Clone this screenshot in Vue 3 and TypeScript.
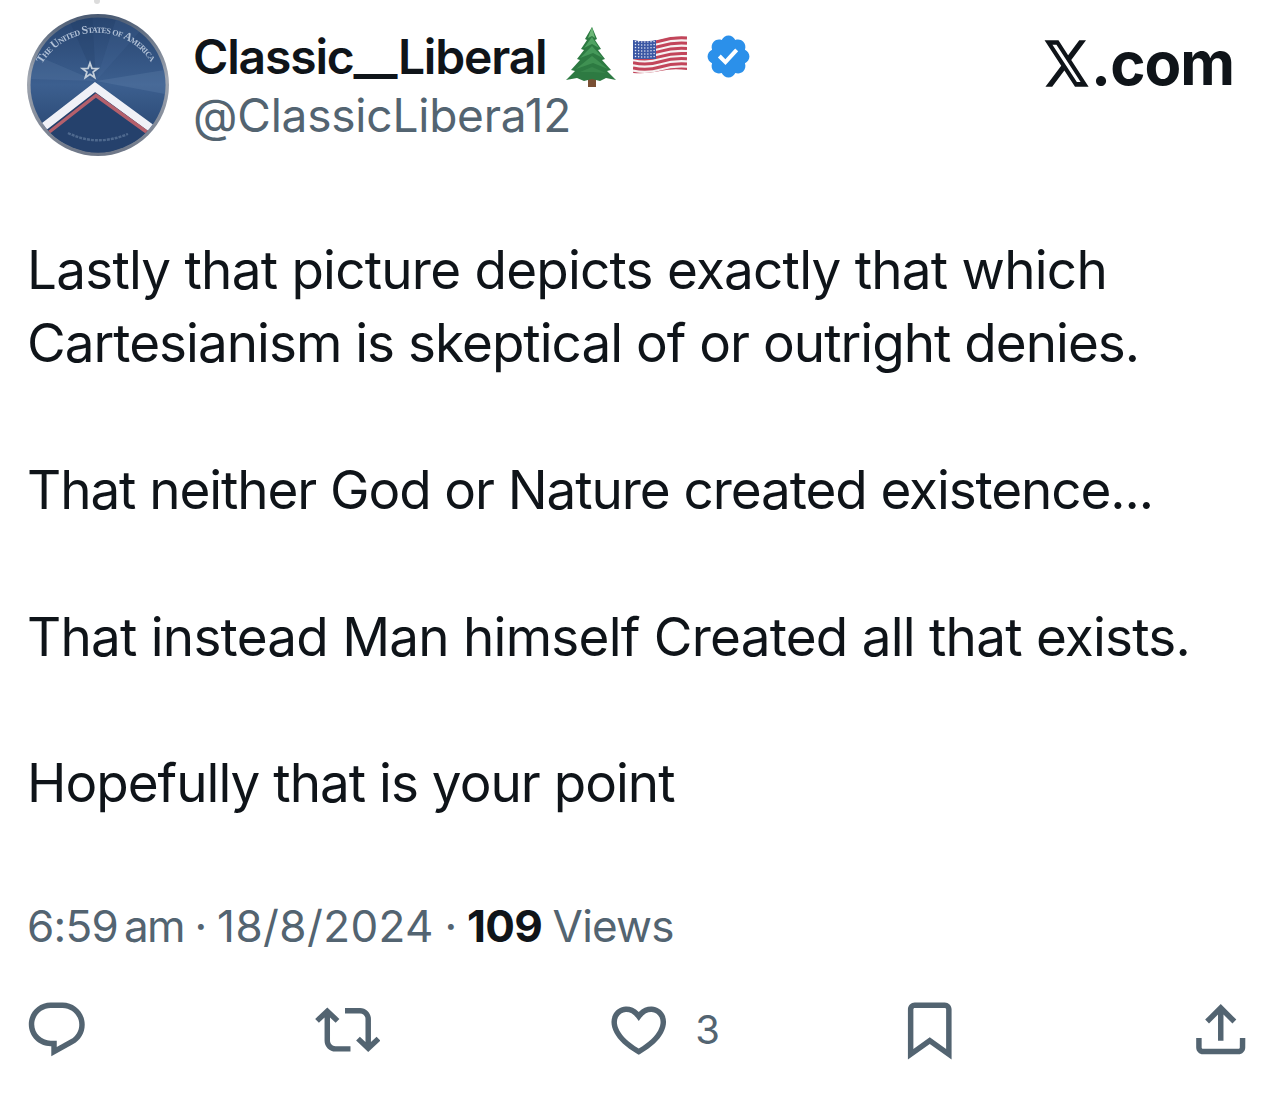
<script setup lang="ts">
interface Line { text: string; cls: string }
const paragraphs: Line[][] = [
  [
    { text: 'Lastly that picture depicts exactly that which', cls: 'wide' },
    { text: 'Cartesianism is skeptical of or outright denies.', cls: 'tight' },
  ],
  [{ text: 'That neither God or Nature created existence...', cls: 'tighter' }],
  [{ text: 'That instead Man himself Created all that exists.', cls: 'wide' }],
  [{ text: 'Hopefully that is your point', cls: 'tight' }],
]
const flagStripes: number[] = [0, 1, 2, 3, 4, 5, 6]
const flagStars: { x: number; y: number }[] = []
for (let r = 0; r < 6; r++) {
  for (let c = 0; c < 7; c++) {
    flagStars.push({ x: 2.5 + c * 3.1, y: 5.5 + r * 3 + Math.sin(c / 2) * 0.6 })
  }
}
</script>

<template>
  <main class="card">
    <header class="head">
      <svg class="avatar" viewBox="0 0 144 144" aria-label="avatar">
        <defs>
          <linearGradient id="ring" x1="0" y1="0" x2="0" y2="1">
            <stop offset="0" stop-color="#4a5a72" />
            <stop offset="0.45" stop-color="#a2a8b2" />
            <stop offset="1" stop-color="#6d7687" />
          </linearGradient>
          <linearGradient id="face" x1="0" y1="0" x2="0" y2="1">
            <stop offset="0" stop-color="#284570" />
            <stop offset="0.5" stop-color="#3c5f8f" />
            <stop offset="1" stop-color="#244069" />
          </linearGradient>
          <clipPath id="disc"><circle cx="72" cy="72" r="67.5" /></clipPath>
          <path id="topArc" d="M16 51 A64 64 0 0 1 126 51" />
        </defs>
        <circle cx="71" cy="-12" r="3" fill="#dcdcdc" />
        <circle cx="72" cy="72" r="71" fill="url(#ring)" />
        <circle cx="72" cy="72" r="67.5" fill="url(#face)" />
        <g clip-path="url(#disc)">
          <polygon points="70,68 0,38 0,66" fill="#6285af" opacity="0.22" />
          <polygon points="70,68 144,56 144,82" fill="#6a8cb5" opacity="0.25" />
          <polygon points="70,68 40,0 66,0" fill="#1f3a63" opacity="0.25" />
          <polygon points="70,68 92,0 130,0" fill="#527aa8" opacity="0.14" />
          <polygon points="70,74 8,118 72,144 136,118" fill="#25416c" />
          <polyline points="15,116 69,74 129,118" fill="none" stroke="#f0f1f7" stroke-width="8" />
          <polyline points="22,120 70,82.5 122,120" fill="none" stroke="#b5606c" stroke-width="3.4" />
        </g>
        <polygon points="64,50 65.9,55.3 71.6,55.5 67.1,59 68.7,64.5 64,61.3 59.3,64.5 60.9,59 56.4,55.5 62.1,55.3" fill="none" stroke="#c3ceda" stroke-width="1.8" />
        <text class="seal" fill="#b0c0d6"><textPath href="#topArc" textLength="130" lengthAdjust="spacing">The United States of America</textPath></text>
        <path d="M42 120 Q70 134 102 121" fill="none" stroke="#6b83a5" stroke-width="2.4" stroke-dasharray="3 1" opacity="0.6" />
      </svg>

      <div class="who">
        <div class="name-row">
          <span class="name">Classic__Liberal</span>
          <svg class="tree" viewBox="0 0 50 60" aria-hidden="true">
            <rect x="22" y="50" width="8" height="10" fill="#7a5034" />
            <polygon fill="#2d7a42" points="26,0 31,12 29,13 35,22 32,23 39,32 36,33 45,43 41,44 50,53 40,51 34,54 26,52 18,54 11,51 0,53 9,44 5,43 14,33 11,32 18,23 15,22 21,13 19,12" />
            <polygon fill="#6cb777" points="26,0 29,11 26,9 22,11" />
            <polygon fill="#4fa262" points="26,10 33,21 26,17 18,21" />
            <polygon fill="#45995a" points="26,19 37,31 27,26 14,31" />
            <polygon fill="#3f9152" points="26,29 42,42 27,36 10,42" />
            <polygon fill="#37864b" points="14,45 26,40 40,46 27,45" />
          </svg>
          <svg class="flag" viewBox="0 0 54 38" aria-hidden="true">
            <defs>
              <clipPath id="flagShape"><path d="M0 4 Q14 7 27 3 T54 0 V34 Q40 32 27 35 T0 37 Z" /></clipPath>
            </defs>
            <g clip-path="url(#flagShape)">
              <rect width="54" height="38" fill="#f6f2f2" />
              <path v-for="s in flagStripes" :key="s" :d="`M0 ${6 + s * 5.2} Q14 ${9 + s * 5.2} 27 ${5 + s * 5.2} T54 ${2 + s * 5.2}`" fill="none" stroke="#c2455a" stroke-width="3" />
              <rect width="23" height="23" fill="#3c58a4" />
              <circle v-for="(st, i) in flagStars" :key="i" :cx="st.x" :cy="st.y" r="0.75" fill="#e8ecf6" />
            </g>
          </svg>
          <svg class="badge" viewBox="0 0 24 24" aria-label="verified">
            <path fill="#2b90ea" d="M22.25 12c0-1.43-.88-2.67-2.19-3.34.46-1.39.2-2.9-.81-3.91s-2.52-1.27-3.91-.81c-.66-1.31-1.91-2.19-3.34-2.19s-2.67.88-3.33 2.19c-1.4-.46-2.91-.2-3.92.81s-1.26 2.52-.8 3.91c-1.31.67-2.2 1.91-2.2 3.34s.89 2.67 2.2 3.34c-.46 1.39-.21 2.9.8 3.91s2.52 1.26 3.91.81c.67 1.31 1.91 2.19 3.34 2.19s2.68-.88 3.34-2.19c1.39.45 2.9.2 3.91-.81s1.27-2.52.81-3.91c1.31-.67 2.19-1.91 2.19-3.34zm-11.71 4.2L6.8 12.46l1.41-1.42 2.26 2.26 4.8-5.23 1.47 1.36-6.2 6.77z" />
          </svg>
        </div>
        <div class="handle">@ClassicLibera12</div>
      </div>

      <div class="brand">
        <svg class="x-logo" viewBox="0 0 24 24" preserveAspectRatio="none" aria-label="X">
          <path fill="#0f1419" d="M18.244 2.25h3.308l-7.227 8.26 8.502 11.24H16.17l-5.214-6.817L4.99 21.75H1.68l7.73-8.835L1.254 2.25H8.08l4.713 6.231zm-1.161 17.52h1.833L7.084 4.126H5.117z" />
        </svg>
        <span class="brand-text">.com</span>
      </div>
    </header>

    <section class="body">
      <p v-for="(p, i) in paragraphs" :key="i" class="para">
        <span v-for="(l, j) in p" :key="j" class="line" :class="l.cls">{{ l.text }}</span>
      </p>
    </section>

    <div class="meta">6:59<span class="am">am</span> · <span class="date">18/8/2024</span> · <b>109</b> Views</div>

    <nav class="actions">
      <svg class="ico" viewBox="0 0 24 24"><path d="M1.751 10c0-4.42 3.584-8 8.005-8h4.366c4.49 0 8.129 3.64 8.129 8.13 0 2.96-1.607 5.68-4.196 7.11l-8.054 4.46v-3.69h-.067c-4.49.1-8.183-3.51-8.183-8.01zm8.005-6c-3.317 0-6.005 2.69-6.005 6 0 3.37 2.77 6.08 6.138 6.01l.351-.01h1.761v2.3l5.087-2.81c1.951-1.08 3.163-3.13 3.163-5.36 0-3.39-2.744-6.13-6.129-6.13H9.756z" /></svg>
      <svg class="ico" viewBox="0 0 24 24"><path d="M4.5 3.88l4.432 4.14-1.364 1.46L5.5 7.55V16c0 1.1.896 2 2 2H13v2H7.5c-2.209 0-4-1.79-4-4V7.55L1.432 9.48.068 8.02 4.5 3.88zM16.5 6H11V4h5.5c2.209 0 4 1.79 4 4v8.45l2.068-1.93 1.364 1.46-4.432 4.14-4.432-4.14 1.364-1.46 2.068 1.93V8c0-1.1-.896-2-2-2z" /></svg>
      <div class="like">
        <svg class="ico" viewBox="0 0 24 24"><path d="M16.697 5.5c-1.222-.06-2.679.51-3.89 2.16l-.805 1.09-.806-1.09C9.984 6.01 8.526 5.44 7.304 5.5c-1.243.07-2.349.78-2.91 1.91-.552 1.12-.633 2.78.479 4.82 1.074 1.97 3.257 4.27 7.129 6.61 3.87-2.34 6.052-4.64 7.126-6.61 1.111-2.04 1.03-3.7.477-4.82-.561-1.13-1.666-1.84-2.908-1.91zm4.187 7.69c-1.351 2.48-4.001 5.12-8.379 7.67l-.503.3-.504-.3c-4.379-2.55-7.029-5.19-8.382-7.67-1.36-2.5-1.41-4.86-.514-6.67.887-1.79 2.647-2.91 4.601-3.01 1.651-.09 3.368.56 4.798 2.01 1.429-1.45 3.146-2.1 4.796-2.01 1.954.1 3.714 1.22 4.601 3.01.896 1.81.846 4.17-.514 6.67z" /></svg>
        <span class="count">3</span>
      </div>
      <svg class="ico" viewBox="0 0 24 24"><path d="M4 4.5C4 3.12 5.119 2 6.5 2h11C18.881 2 20 3.12 20 4.5v18.44l-8-5.71-8 5.71V4.5zM6.5 4c-.276 0-.5.22-.5.5v14.56l6-4.29 6 4.29V4.5c0-.28-.224-.5-.5-.5h-11z" /></svg>
      <svg class="ico" viewBox="0 0 24 24"><path d="M12 2.59l5.7 5.7-1.41 1.42L13 6.41V16h-2V6.41l-3.3 3.3-1.41-1.42L12 2.59zM21 15l-.02 3.51c0 1.38-1.12 2.49-2.5 2.49H5.5C4.11 21 3 19.88 3 18.5V15h2v3.5c0 .28.22.5.5.5h12.98c.28 0 .5-.22.5-.5L19 15h2z" /></svg>
    </nav>
  </main>
</template>

<style scoped>
.card {
  width: 1268px;
  height: 1096px;
  box-sizing: border-box;
  overflow: hidden;
  background: #fff;
  color: #0f1419;
  font-family: Inter, "Liberation Sans", sans-serif;
  padding-top: 13px;
}
.head {
  display: flex;
  align-items: flex-start;
  padding: 0 34px 0 26px;
}
.avatar {
  width: 144px;
  height: 144px;
  overflow: visible;
  flex: none;
  filter: blur(0.5px);
}
.seal {
  font-family: "Liberation Serif", serif;
  font-weight: 700;
  font-size: 11.5px;
  font-variant: small-caps;
}
.who {
  margin-left: 23px;
  padding-top: 14px;
}
.name-row {
  display: flex;
  align-items: center;
  height: 60px;
}
.name {
  font-size: 48px;
  font-weight: 600;
  letter-spacing: -1.17px;
  line-height: 56px;
}
.tree {
  width: 50px;
  height: 60px;
  margin-left: 20px;
}
.flag {
  width: 54px;
  height: 38px;
  margin-left: 17px;
  margin-top: -4px;
}
.badge {
  width: 49px;
  height: 49px;
  margin-left: 17px;
  margin-top: -2px;
}
.handle {
  font-size: 46px;
  line-height: 56px;
  letter-spacing: -0.2px;
  color: #536471;
}
.brand {
  margin-left: auto;
  padding-top: 19px;
  display: flex;
  align-items: center;
}
.x-logo {
  width: 49px;
  height: 57px;
}
.brand-text {
  font-size: 60px;
  font-weight: 700;
  line-height: 62px;
  letter-spacing: -1px;
}
.body {
  padding: 77px 27px 0;
}
.para {
  margin: 0 0 73.4px;
  font-size: 53px;
  line-height: 73.3px;
}
.para:last-child {
  margin-bottom: 0;
}
.line {
  display: block;
  white-space: nowrap;
}
.wide {
  letter-spacing: -0.76px;
}
.tight {
  letter-spacing: -0.98px;
}
.tighter {
  letter-spacing: -1.08px;
}
.meta {
  margin: 77px 0 0 27px;
  font-size: 44px;
  line-height: 56px;
  letter-spacing: -0.77px;
  word-spacing: -1px;
  color: #536471;
}
.meta b {
  color: #0f1419;
  font-weight: 700;
}
.am {
  margin-left: 6px;
  letter-spacing: -1.6px;
}
.date {
  letter-spacing: 0.4px;
}
.actions {
  margin-top: 43px;
  display: flex;
  align-items: center;
  justify-content: space-between;
  padding: 0 15px 0 24px;
}
.ico {
  width: 65.5px;
  height: 65.5px;
  flex: none;
  fill: #536471;
}
.like {
  display: flex;
  align-items: center;
  width: 65.5px;
}
.count {
  flex: none;
  margin-left: 24px;
  font-size: 40px;
  color: #536471;
}
</style>

<style>
html, body { background: #fff; }
</style>
